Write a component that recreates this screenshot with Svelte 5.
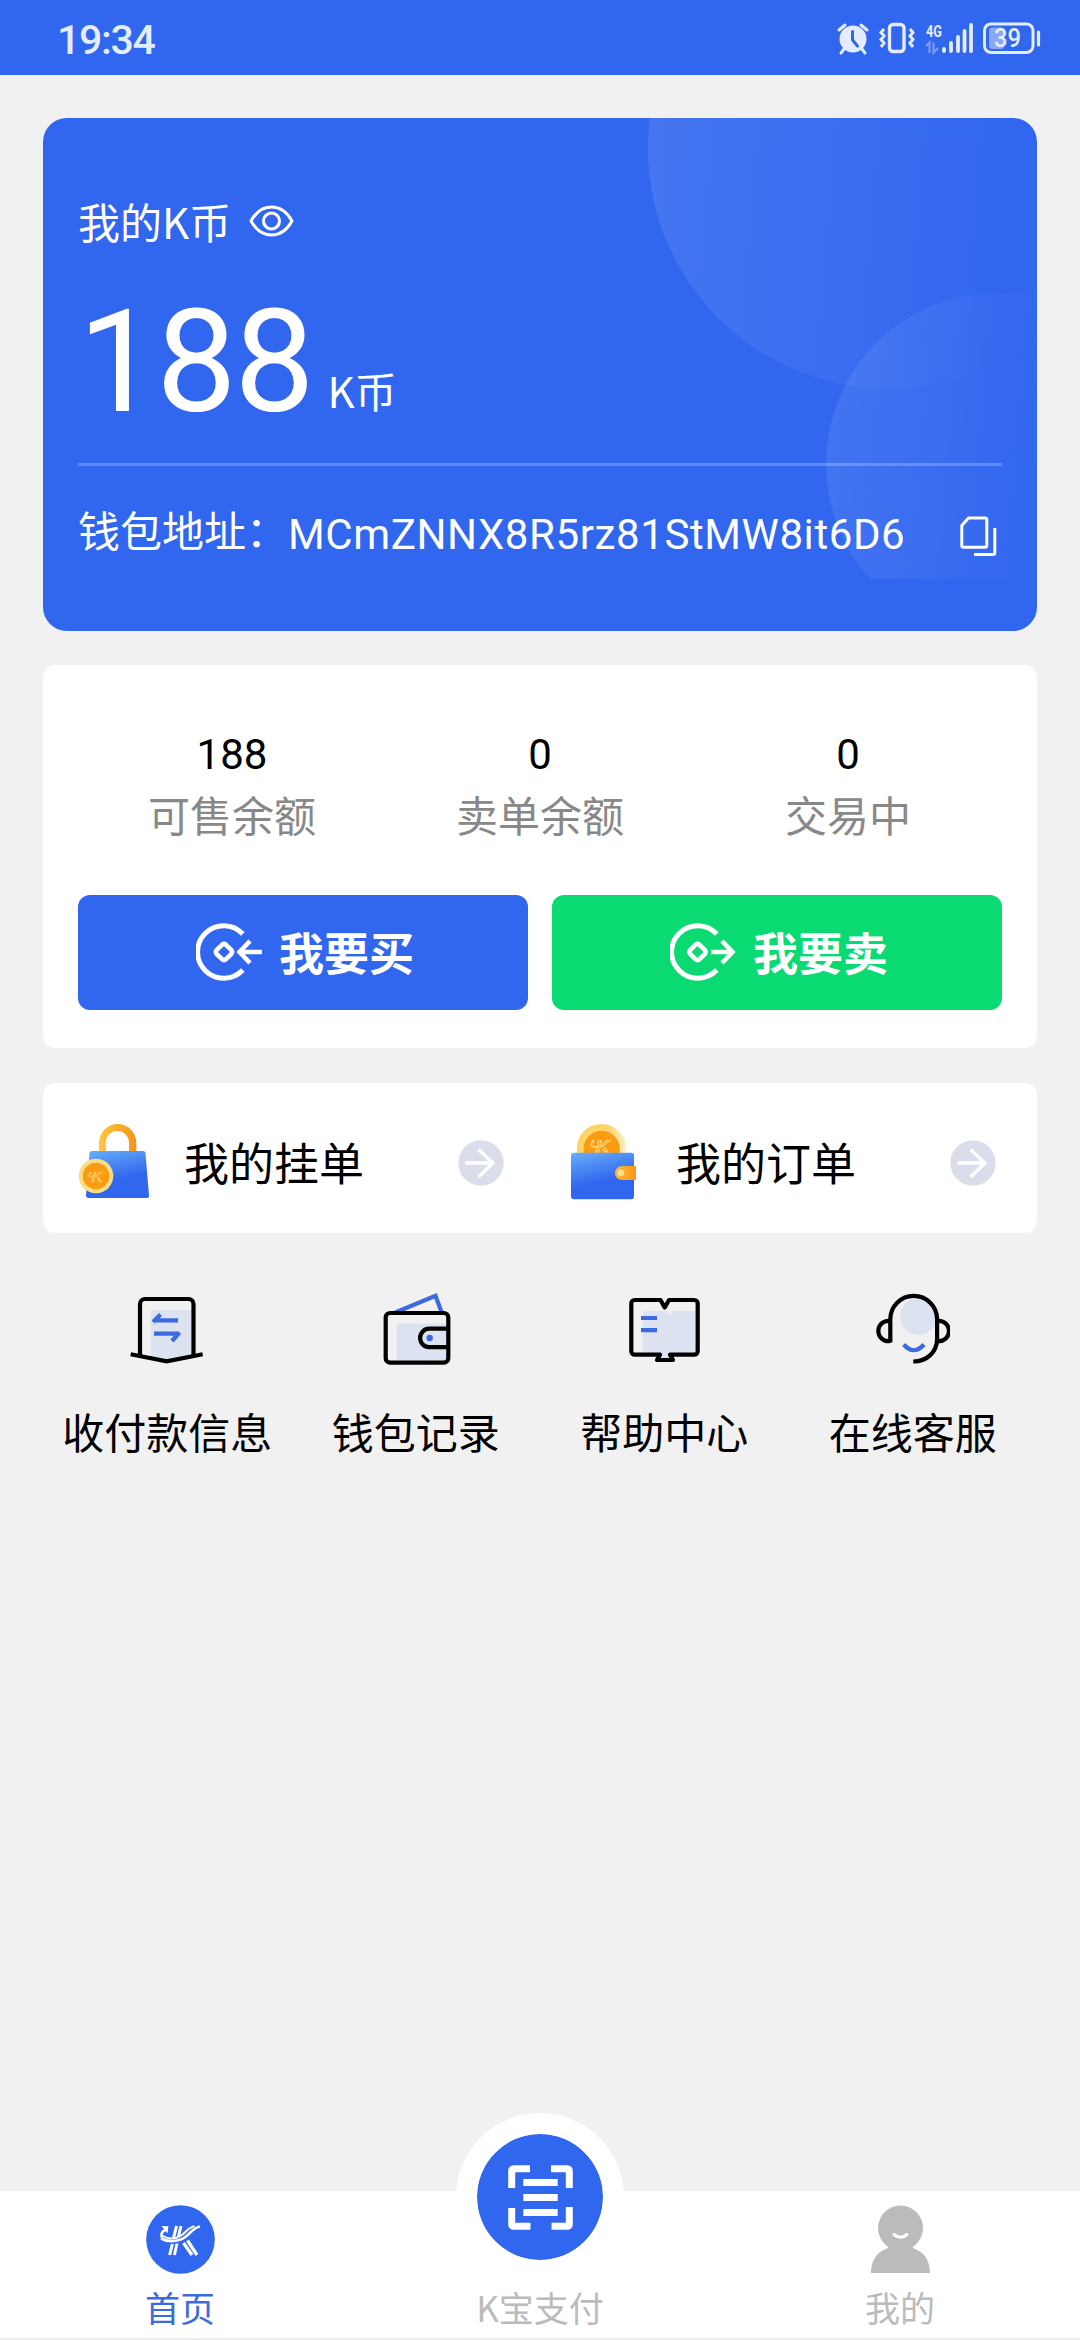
<script lang="ts">
	const wallet = {
		balance: 188,
		unit: 'K币',
		address: 'MCmZNNX8R5rz81StMW8it6D6'
	};

	const stats = [
		{ value: 188, label: '可售余额' },
		{ value: 0, label: '卖单余额' },
		{ value: 0, label: '交易中' }
	];

	const menu = [
		{ icon: 'receipt', label: '收付款信息' },
		{ icon: 'wallet', label: '钱包记录' },
		{ icon: 'book', label: '帮助中心' },
		{ icon: 'support', label: '在线客服' }
	];
</script>

{#snippet mark()}
	<g fill="none" stroke="currentColor">
		<path d="M30.6 21 27.6 32.5M26.4 39 23.6 50M35 21 32.6 31M31 38.5 28.4 50" stroke-width="3" />
		<path d="M37.5 38 46 50M41.5 35.5 51 50" stroke-width="3.2" />
		<path d="M15 33.5C22 37.5 33 37 40 31.5 45 27.5 48 22.5 54 21.5" stroke-width="2.6" />
		<path d="M16 30.5C24 35.5 31 33.5 36.5 29.5 41 26 43 22 48.5 21.2" stroke-width="2" />
		<path d="M16 33C14.5 29 15.5 26.5 19.5 25" stroke-width="2.6" />
	</g>
	<path d="M15.5 21 22.4 21.3 21.5 28.5Z" fill="currentColor" />
{/snippet}

{#snippet go()}
	<svg class="go" width="46" height="46" viewBox="0 0 46 46">
		<circle cx="23" cy="23" r="22.7" fill="#dadeea" />
		<path d="M8.5 23H35M21.5 10.5 35 23 21.5 36" fill="none" stroke="#fff" stroke-width="3.3" stroke-linecap="round" stroke-linejoin="round" />
	</svg>
{/snippet}

<div class="page">
	<header class="status">
		<span class="time">19:34</span>
		<div class="indicators">
			<svg width="32" height="32" viewBox="0 0 32 32">
				<path d="M2 8 8 3M30 8 24 3M7 27 4 31M25 27 28 31" stroke="#e4ecff" stroke-width="3" stroke-linecap="round" />
				<circle cx="16" cy="17" r="13.5" fill="#e4ecff" />
				<path d="M15.5 9.5V18L20.5 24" fill="none" stroke="#3166ef" stroke-width="3" stroke-linecap="round" />
			</svg>
			<svg width="36" height="32" viewBox="0 0 36 32" fill="none" stroke="#e4ecff">
				<rect x="10.5" y="2.5" width="14.5" height="27" rx="3.5" stroke-width="3.4" />
				<path d="M5 7 2 10.5 5 14 2 17.5 5 21 2 25M31 7 34 10.5 31 14 34 17.5 31 21 34 25" stroke-width="3" />
			</svg>
			<svg width="48" height="32" viewBox="0 0 48 32">
				<text x="1" y="14.5" textLength="16" lengthAdjust="spacingAndGlyphs">4G</text>
				<path d="M1 24 4.500 20.500V31M8.500 20.500V30.500L13 26" fill="none" stroke="#7b9df6" stroke-width="2.2" />
				<path d="M19 27V29M26 21V29M33 15V29M39.500 9V29M46 3V29" stroke="#e4ecff" stroke-width="3.8" stroke-linecap="round" />
			</svg>
			<svg class="battery" width="58" height="32" viewBox="0 0 58 32">
				<rect x="6" y="5.5" width="15" height="21.5" rx="3" fill="#89a9f8" />
				<rect x="1.5" y="2" width="48.5" height="28.5" rx="6.5" fill="none" stroke="#e4ecff" stroke-width="3" />
				<path d="M55.500 10V23" stroke="#e4ecff" stroke-width="3.2" stroke-linecap="round" />
				<text x="11" y="25" textLength="27" lengthAdjust="spacingAndGlyphs">39</text>
			</svg>
		</div>
	</header>

	<main>
		<section class="balance">
			<svg class="rings" width="994" height="461" viewBox="0 0 994 461">
				<defs>
					<linearGradient id="ring-a" gradientUnits="userSpaceOnUse" x1="605" y1="0" x2="970" y2="30">
						<stop offset="0" stop-color="#fff" stop-opacity=".1" />
						<stop offset="1" stop-color="#fff" stop-opacity="0" />
					</linearGradient>
					<linearGradient id="ring-b" gradientUnits="userSpaceOnUse" x1="783" y1="0" x2="1020" y2="20">
						<stop offset="0" stop-color="#fff" stop-opacity=".1" />
						<stop offset="1" stop-color="#fff" stop-opacity="0" />
					</linearGradient>
				</defs>
				<circle cx="845" cy="30.500" r="240" fill="url(#ring-a)" />
				<circle cx="954" cy="346" r="171" fill="url(#ring-b)" />
			</svg>
			<div class="title">
				<span>我的K币</span>
				<svg width="46" height="34" viewBox="0 0 46 34" fill="none" stroke="#fff" stroke-width="3">
					<path d="M2 17C7 8 14.500 3 22.500 3S38 8 43 17C38 26 30.500 31 22.500 31S7 26 2 17Z" stroke-linejoin="round" />
					<circle cx="22.500" cy="17" r="8" />
				</svg>
			</div>
			<div class="amount">
				<strong>{wallet.balance}</strong>
				<span>{wallet.unit}</span>
			</div>
			<div class="address">
				<span>钱包地址：</span>
				<span class="value">{wallet.address}</span>
				<svg width="37" height="41" viewBox="0 0 37 41" fill="none" stroke="#fff" stroke-width="3">
					<path d="M8.500 2H25a1.800 1.800 0 0 1 1.800 1.800V29.500a1.800 1.800 0 0 1-1.800 1.800H3.600A1.800 1.800 0 0 1 1.800 29.500V9.500Z" stroke-linejoin="round" />
					<path d="M34.800 12V36.800a1.800 1.800 0 0 1-1.800 1.800H14" />
				</svg>
			</div>
		</section>

		<section class="trade">
			<div class="stats">
				{#each stats as stat}
					<div class="stat">
						<span class="number">{stat.value}</span>
						<span class="name">{stat.label}</span>
					</div>
				{/each}
			</div>
			<div class="actions">
				<button class="buy">
					<svg width="66" height="60" viewBox="0 0 66 60" fill="none" stroke="#fff">
						<path d="M46.800 12A26.200 26.200 0 1 0 46.800 48" stroke-width="5" />
						<rect x="21.500" y="23.500" width="13" height="13" rx="2.500" transform="rotate(45 28 30)" stroke-width="4.600" />
						<path d="M66 30H44M54 19 43.500 30 54 41" stroke-width="4.600" />
					</svg>
					我要买
				</button>
				<button class="sell">
					<svg width="66" height="60" viewBox="0 0 66 60" fill="none" stroke="#fff">
						<path d="M46.800 12A26.200 26.200 0 1 0 46.800 48" stroke-width="5" />
						<rect x="21" y="23.500" width="13" height="13" rx="2.500" transform="rotate(45 27.500 30)" stroke-width="4.600" />
						<path d="M41 30H62M52 19 62.500 30 52 41" stroke-width="4.600" />
					</svg>
					我要卖
				</button>
			</div>
		</section>

		<section class="links">
			<div class="link">
				<svg width="75" height="76" viewBox="0 0 75 76">
					<defs>
						<linearGradient id="bag" x1="0" y1="0" x2=".3" y2="1">
							<stop offset="0" stop-color="#66aff8" />
							<stop offset=".7" stop-color="#3166ef" />
						</linearGradient>
						<linearGradient id="gold" x1="0" y1="0" x2="1" y2="0">
							<stop offset="0" stop-color="#fdc741" />
							<stop offset="1" stop-color="#f7931a" />
						</linearGradient>
					</defs>
					<path d="M21 29V19.700a18.600 18.600 0 0 1 37.300 0V29H51V19.700a11.600 11.600 0 0 0-23.200 0V29Z" fill="url(#gold)" />
					<path d="M14 28H65a2.500 2.500 0 0 1 2.500 2.500L71 72.500a2 2 0 0 1-2 2.500H10.500A2.500 2.500 0 0 1 8 72L11.500 30.500A2.500 2.500 0 0 1 14 28Z" fill="url(#bag)" />
					<circle cx="18" cy="53" r="17.300" fill="#fbdd84" />
					<circle cx="18" cy="53" r="13.200" fill="#fb9b12" />
					<g class="coin" transform="translate(5 41) scale(.37)">{@render mark()}</g>
				</svg>
				<span>我的挂单</span>
				{@render go()}
			</div>
			<div class="link">
				<svg width="75" height="77" viewBox="0 0 75 77">
					<defs>
						<linearGradient id="coin" x1="0" y1="0" x2="1" y2="0">
							<stop offset=".6" stop-color="#fcd468" />
							<stop offset="1" stop-color="#fdeebf" />
						</linearGradient>
						<linearGradient id="clasp" x1="0" y1="0" x2="1" y2="0">
							<stop offset="0" stop-color="#fdbb3c" />
							<stop offset="1" stop-color="#f9951a" />
						</linearGradient>
					</defs>
					<circle cx="31.400" cy="25.500" r="24.600" fill="url(#coin)" />
					<circle cx="31.700" cy="26" r="18.200" fill="#fb9b12" />
					<g class="coin" transform="translate(13 6) scale(.52)">{@render mark()}</g>
					<rect x="1" y="29.700" width="63" height="46.500" rx="3" fill="url(#bag)" />
					<path d="M66 43V57H52a7 7 0 0 1 0-14Z" fill="url(#clasp)" />
					<circle cx="51" cy="49.800" r="3.300" fill="#fde08a" />
				</svg>
				<span>我的订单</span>
				{@render go()}
			</div>
		</section>

		<nav class="menu">
			{#each menu as item}
				<div class="entry">
					<svg width="75" height="75" viewBox="0 0 75 75" fill="none" stroke="#000" stroke-width="4.200">
						{#if item.icon === 'receipt'}
							<path class="shade" d="M20.700 21a3 3 0 0 1 3-3H62V63L37 68 20.700 65Z" />
							<path d="M10 63V12a5 5 0 0 1 5-5H58.500a5 5 0 0 1 5 5V63" />
							<path d="M.7 62.300 36.700 69.300 72.700 62.300" />
							<path class="accent" d="M48 28.300H24.500M23 30 30.500 22.500M24 41.700H48.500M49.500 40.500 42 49" />
						{:else if item.icon === 'wallet'}
							<path class="accent" d="M17.300 20.500 57.500 3.700 63.500 20" />
							<path class="shade" d="M18.700 34a2.500 2.500 0 0 1 2.500-2.500H69V69.500H18.700Z" />
							<rect x="7.700" y="21" width="62.600" height="49.700" rx="4.500" />
							<path d="M70 36.700H51.300a9.200 9.200 0 0 0 0 18.400H70" />
							<circle class="dot" cx="51.700" cy="46" r="3.200" />
						{:else if item.icon === 'book'}
							<path class="shade" d="M15.700 22a3 3 0 0 1 3-3H39.700L43 24 46 19H69V61H42V66H33V61H15.700Z" />
							<path d="M33.500 8H7.800A3.500 3.500 0 0 0 4.300 11.500V59.200A3.500 3.500 0 0 0 7.800 62.700H33L30 68H46L43 62.700H67.200A3.500 3.500 0 0 0 70.700 59.200V11.500A3.500 3.500 0 0 0 67.200 8H42L37.700 15.500Z" stroke-linejoin="round" />
							<path class="accent" d="M14 26H30M14 38.200H30" />
						{:else}
							<circle class="shade" cx="43.500" cy="24.500" r="18.500" />
							<path d="M15.300 50.500V27.300a23.400 23.400 0 0 1 46.800 0V47C62 60 52 69.500 38.300 69.500" />
							<path d="M15.300 28.800H13.500a10.200 10.200 0 0 0 0 20.400H15.300M62 28.800H63.800a10.200 10.200 0 0 1 0 20.400H62" />
							<path class="accent" d="M28.700 52.500Q38.800 64 49 52.500" />
						{/if}
					</svg>
					<span>{item.label}</span>
				</div>
			{/each}
		</nav>
	</main>

	<footer class="tabs">
		<div class="tab active">
			<svg width="69" height="69" viewBox="0 0 69 69">
				<circle cx="34.500" cy="34.500" r="34.300" fill="#3166ef" />
				<g class="logo">{@render mark()}</g>
			</svg>
			<span>首页</span>
		</div>
		<div class="tab pay">
			<div class="scan">
				<svg width="65" height="65" viewBox="0 0 65 65" fill="none" stroke="#fff" stroke-width="7">
					<path d="M3.700 23V5.500A1.800 1.800 0 0 1 5.500 3.700H22M43 3.700H59.500A1.800 1.800 0 0 1 61.300 5.500V23M61.300 42V59.500A1.800 1.800 0 0 1 59.500 61.300H43.500M22.500 61.300H5.500A1.800 1.800 0 0 1 3.700 59.500V43" />
					<path d="M15.300 17.500H49.700M15.300 32.500H49.700M15.300 47.500H49.700" />
				</svg>
			</div>
			<span>K宝支付</span>
		</div>
		<div class="tab">
			<svg width="69" height="69" viewBox="0 0 69 69">
				<circle cx="34.500" cy="23" r="22.500" fill="#bbb" />
				<path d="M5 68C5 54 12 47 21 43.500L25 40H44L48 43.500C57 47 64 54 64 68Z" fill="#bbb" />
				<path d="M28 29.500Q34.500 35 41 29.500" fill="none" stroke="#fff" stroke-width="3" stroke-linecap="round" />
			</svg>
			<span>我的</span>
		</div>
	</footer>
</div>

<style>
	:global(body) {
		background: #f1f1f1;
	}

	.page {
		display: flex;
		flex-direction: column;
		width: 1080px;
		height: 2340px;
		background: #f1f1f1;
		font-family: 'Noto Sans CJK SC', sans-serif;
		color: #000;
	}

	svg {
		display: block;
		flex: none;
	}

	.status {
		display: flex;
		justify-content: space-between;
		align-items: center;
		height: 75px;
		padding: 0 39px 0 57px;
		box-sizing: border-box;
		background: #3166ef;
		color: #e4ecff;
		font-family: Roboto, sans-serif;
	}

	.time {
		padding-top: 5px;
		font-size: 41px;
		font-weight: 500;
		letter-spacing: -1.3px;
	}

	.indicators {
		display: flex;
		gap: 10px;
	}

	.indicators svg {
		overflow: visible;
	}

	.indicators text {
		fill: #e4ecff;
		font-weight: 700;
		font-size: 17px;
	}

	.indicators .battery text {
		font-size: 25px;
		font-weight: 500;
	}

	main {
		flex: 1;
		padding: 43px 43px 0;
	}

	.balance {
		position: relative;
		height: 513px;
		padding: 73px 35px 0;
		box-sizing: border-box;
		border-radius: 24px;
		background: #3166ef;
		color: #fff;
		font-size: 42px;
		line-height: 60px;
		overflow: hidden;
	}

	.rings {
		position: absolute;
		top: 0;
		left: 0;
	}

	.title {
		display: flex;
		align-items: center;
		gap: 18px;
	}

	.title svg {
		margin-bottom: 1px;
	}

	.amount {
		display: flex;
		align-items: flex-end;
		gap: 15px;
		margin-top: 41px;
		padding-bottom: 31px;
		border-bottom: 3px solid #5c88f8;
	}

	.amount strong {
		font-family: Roboto, sans-serif;
		font-size: 143px;
		font-weight: 400;
		letter-spacing: -2.2px;
		line-height: 140px;
	}

	.amount span {
		margin-bottom: 12px;
	}

	.address {
		display: flex;
		align-items: flex-start;
		margin-top: 33px;
		padding-right: 5px;
	}

	.address .value {
		flex: 1;
		margin-top: 6px;
		font-family: Roboto, sans-serif;
		letter-spacing: 0.6px;
	}

	.address svg {
		margin-top: 17px;
	}

	.trade {
		height: 383px;
		margin-top: 34px;
		padding: 56px 35px 0;
		box-sizing: border-box;
		border-radius: 12px;
		background: #fff;
	}

	.stats {
		display: grid;
		grid-template-columns: repeat(3, 1fr);
	}

	.stat {
		display: flex;
		flex-direction: column;
		align-items: center;
		gap: 1px;
		font-size: 42px;
		line-height: 60px;
	}

	.number {
		padding-top: 6px;
		font-family: Roboto, sans-serif;
		line-height: 56px;
	}

	.name {
		color: #888;
	}

	.actions {
		display: grid;
		grid-template-columns: 1fr 1fr;
		gap: 24px;
		margin-top: 51px;
	}

	button {
		display: flex;
		align-items: center;
		gap: 17px;
		height: 115px;
		padding: 0 0 2px 118px;
		border: 0;
		border-radius: 12px;
		color: #fff;
		font: 700 45px/60px 'Noto Sans CJK SC', sans-serif;
	}

	.buy {
		background: #3166ef;
	}

	.sell {
		background: #09da72;
	}

	.links {
		display: grid;
		grid-template-columns: 1fr 1fr;
		gap: 66px;
		height: 150px;
		margin-top: 35px;
		padding: 6px 41px 0 35px;
		box-sizing: border-box;
		border-radius: 12px;
		background: #fff;
	}

	.link {
		display: flex;
		align-items: center;
		font-size: 45px;
	}

	.link span {
		flex: 1;
		margin-left: 31px;
	}

	.go {
		margin-top: 3px;
	}

	.coin {
		color: #fdd376;
	}

	.logo {
		color: #fff;
	}

	.menu {
		display: grid;
		grid-template-columns: repeat(4, 1fr);
		margin-top: 59px;
	}

	.entry {
		display: flex;
		flex-direction: column;
		align-items: center;
		gap: 34px;
		font-size: 42px;
		line-height: 60px;
	}

	.shade {
		fill: #dde2f1;
		stroke: none;
	}

	.accent {
		stroke: #3c6ae0;
	}

	.dot {
		fill: #3c6ae0;
		stroke: none;
	}

	.tabs {
		display: grid;
		grid-template-columns: repeat(3, 1fr);
		height: 149px;
		box-sizing: border-box;
		border-bottom: 2px solid #ececec;
		background: #fff;
	}

	.tab {
		display: flex;
		flex-direction: column;
		align-items: center;
		gap: 8px;
		padding-top: 14px;
		color: #bbb;
		font-size: 35px;
		line-height: 50px;
	}

	.active {
		color: #3c6ae0;
	}

	.pay {
		padding-top: 0;
		margin-top: -78px;
		gap: 1px;
	}

	.scan {
		display: flex;
		justify-content: center;
		align-items: center;
		width: 126px;
		height: 126px;
		border: 21px solid #fff;
		border-radius: 50%;
		background: #3166ef;
		background-clip: padding-box;
	}
</style>
